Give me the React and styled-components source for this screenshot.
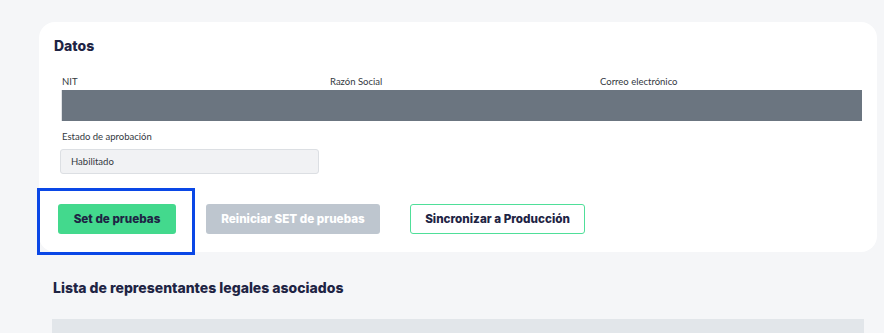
import React from "react";
import styled, { createGlobalStyle } from "styled-components";

const Global = createGlobalStyle`
  html, body { margin: 0; padding: 0; background: #f5f6f8; }
  * { box-sizing: border-box; }
`;

const Page = styled.div`
  padding: 22px 7px 0 39px;
  height: 333px;
  overflow: hidden;
  font-family: Lato, "Noto Sans", sans-serif;
`;

const Card = styled.section`
  background: #ffffff;
  border-radius: 16px;
  height: 230px;
  padding: 15px 15px 0 15px;
`;

const Title = styled.h2`
  margin: 0;
  font-family: Inter, "Liberation Sans", sans-serif;
  font-weight: 800;
  font-size: 14px;
  line-height: 18px;
  color: #1e2444;
`;

const Fields = styled.div`
  margin-top: 20px;
  padding-left: 6px;
`;

const Grid = styled.div`
  display: grid;
  grid-template-columns: 269px 270px 1fr;
`;

const Label = styled.div`
  font-size: 9.5px;
  line-height: 14px;
  color: #33383e;
  padding-left: ${(p) => p.$indent ?? 1}px;
  margin-bottom: 1px;
`;

const Masked = styled.div`
  grid-column: 1 / -1;
  height: 31px;
  margin-left: 1px;
  background: #6b7580;
  border-left: 1px solid #e0e3e6;
`;

const FieldBlock = styled.div`
  margin-top: 9px;
`;

const ReadOnlyInput = styled.div`
  margin-top: 5px;
  width: 259px;
  height: 25px;
  background: #f1f2f4;
  border: 1px solid #dcdfe3;
  border-radius: 3px;
  padding-left: 10px;
  display: flex;
  align-items: center;
  font-size: 9.5px;
  color: #33383e;
`;

const Actions = styled.div`
  display: flex;
  align-items: center;
  gap: 30px;
  margin-top: 30px;
  padding-left: 4px;
`;

const Button = styled.button`
  height: 30px;
  width: ${(p) => p.$w}px;
  padding: 0;
  white-space: nowrap;
  border-radius: 3px;
  font-family: Inter, "Liberation Sans", sans-serif;
  font-weight: 800;
  font-size: 11.7px;
  cursor: pointer;
  border: 1.5px solid ${(p) => (p.$variant === "outline" ? "#4fdf99" : "transparent")};
  background: ${(p) =>
    p.$variant === "primary" ? "#43d98d" : p.$variant === "disabled" ? "#bec6cf" : "#ffffff"};
  color: ${(p) => (p.$variant === "disabled" ? "#ffffff" : "#1e2444")};
`;

const FocusWrap = styled.div`
  position: relative;
  display: flex;
`;

const FocusRing = styled.span`
  position: absolute;
  left: -21px;
  top: -16px;
  width: 158px;
  height: 67px;
  border: 3px solid #0a47e6;
  pointer-events: none;
`;

const SectionTitle = styled.h2`
  margin: 27px 0 0 14px;
  font-family: Inter, "Liberation Sans", sans-serif;
  font-weight: 800;
  font-size: 14px;
  line-height: 18px;
  color: #1e2444;
`;

const TableHead = styled.div`
  margin: 22px 13px 0 13px;
  height: 20px;
  background: #e2e6ea;
`;

export default function App() {
  return (
    <>
      <Global />
      <Page>
        <Card>
          <Title>Datos</Title>
          <Fields>
            <Grid>
              <Label $indent={2}>NIT</Label>
              <Label $indent={1}>Razón Social</Label>
              <Label $indent={1}>Correo electrónico</Label>
              <Masked />
            </Grid>
            <FieldBlock>
              <Label $indent={2}>Estado de aprobación</Label>
              <ReadOnlyInput>Habilitado</ReadOnlyInput>
            </FieldBlock>
          </Fields>
          <Actions>
            <FocusWrap>
              <Button $variant="primary" $w={118}>Set de pruebas</Button>
              <FocusRing />
            </FocusWrap>
            <Button $variant="disabled" $w={174}>Reiniciar SET de pruebas</Button>
            <Button $variant="outline" $w={175}>Sincronizar a Producción</Button>
          </Actions>
        </Card>
        <SectionTitle>Lista de representantes legales asociados</SectionTitle>
        <TableHead />
      </Page>
    </>
  );
}
